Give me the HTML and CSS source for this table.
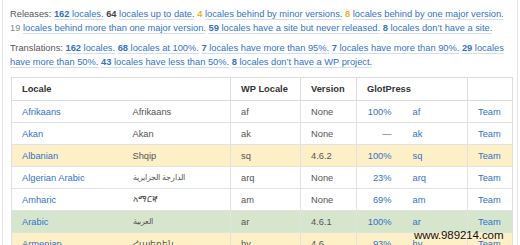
FILE: index.html
```html
<!DOCTYPE html>
<html lang="en">
<head>
<meta charset="utf-8">
<title>Locales</title>
<link rel="stylesheet" href="styles.css">
</head>
<body>
<div class="page">
  <p class="summary">Releases: <a href="#"><b>162</b> locales.</a> <b class="dark">64</b> <a href="#">locales up to date.</a> <b class="orange">4</b> <a href="#">locales behind by minor versions.</a> <b class="orange">8</b> <a href="#">locales behind by one major version.</a> <b class="grey">19</b> <a href="#">locales behind more than one major version.</a> <a href="#"><b>59</b> locales have a site but never released.</a> <a href="#"><b>8</b> locales don’t have a site.</a></p>
  <p class="summary">Translations: <a href="#"><b>162</b> locales.</a> <a href="#"><b>68</b> locales at 100%.</a> <a href="#"><b>7</b> locales have more than 95%.</a> <a href="#"><b>7</b> locales have more than 90%.</a> <a href="#"><b>29</b> locales have more than 50%.</a> <a href="#"><b>43</b> locales have less than 50%.</a> <a href="#"><b>8</b> locales don’t have a WP project.</a></p>
  <table class="locales">
    <colgroup>
      <col class="c-name"><col class="c-native"><col class="c-wp"><col class="c-ver"><col class="c-pct"><col class="c-code"><col class="c-team">
    </colgroup>
    <thead>
      <tr><th colspan="2">Locale</th><th>WP Locale</th><th>Version</th><th colspan="2">GlotPress</th><th></th></tr>
    </thead>
    <tbody>
      <tr><td class="nm"><a href="#">Afrikaans</a></td><td class="nat">Afrikaans</td><td>af</td><td>None</td><td class="pct"><a href="#">100%</a></td><td class="code"><a href="#">af</a></td><td class="team"><a href="#">Team</a></td></tr>
      <tr><td class="nm"><a href="#">Akan</a></td><td class="nat">Akan</td><td>ak</td><td>None</td><td class="pct">—</td><td class="code"><a href="#">ak</a></td><td class="team"><a href="#">Team</a></td></tr>
      <tr class="minor"><td class="nm"><a href="#">Albanian</a></td><td class="nat">Shqip</td><td>sq</td><td>4.6.2</td><td class="pct"><a href="#">100%</a></td><td class="code"><a href="#">sq</a></td><td class="team"><a href="#">Team</a></td></tr>
      <tr><td class="nm"><a href="#">Algerian Arabic</a></td><td class="nat ar">الدارجة الجزايرية</td><td>arq</td><td>None</td><td class="pct"><a href="#">23%</a></td><td class="code"><a href="#">arq</a></td><td class="team"><a href="#">Team</a></td></tr>
      <tr><td class="nm"><a href="#">Amharic</a></td><td class="nat">አማርኛ</td><td>am</td><td>None</td><td class="pct"><a href="#">69%</a></td><td class="code"><a href="#">am</a></td><td class="team"><a href="#">Team</a></td></tr>
      <tr class="latest"><td class="nm"><a href="#">Arabic</a></td><td class="nat ar">العربية</td><td>ar</td><td>4.6.1</td><td class="pct"><a href="#">100%</a></td><td class="code"><a href="#">ar</a></td><td class="team"><a href="#">Team</a></td></tr>
      <tr class="minor"><td class="nm"><a href="#">Armenian</a></td><td class="nat">Հայերեն</td><td>hy</td><td>4.6</td><td class="pct"><a href="#">93%</a></td><td class="code"><a href="#">hy</a></td><td class="team"><a href="#">Team</a></td></tr>
    </tbody>
  </table>
  <div class="watermark">www.989214.com</div>
</div>
</body>
</html>
```
FILE: styles.css
```css
html, body {
  margin: 0;
  padding: 0;
  background: #fff;
  overflow: hidden;
}
body {
  font-family: "Liberation Sans", Arial, sans-serif;
  font-size: 9.3px;
  color: #555;
}
.page {
  position: relative;
  margin-left: 2px;
  width: 516px;
  height: 245px;
  overflow: hidden;
  border-left: 1px solid #e4e4e4;
  border-right: 1px solid #e4e4e4;
  padding: 8px 5px 0 8px;
  box-sizing: border-box;
}
.summary {
  margin: 0 0 7px -1px;
  line-height: 13.5px;
}
.summary + .summary {
  margin-bottom: 8px;
}
a {
  color: #3273c9;
  text-decoration: underline;
  text-decoration-color: #d3def0;
  text-underline-offset: 2px;
}
b { font-weight: bold; }
.dark { color: #444; }
.orange { color: #efb21a; }
.grey { color: #8c8c8c; font-weight: normal; }
.locales {
  width: 501px;
  border-collapse: collapse;
  table-layout: fixed;
  border: 1px solid #dcdcdc;
}
.c-name { width: 111px; }
.c-native { width: 108px; }
.c-wp { width: 70px; }
.c-ver { width: 56px; }
.c-pct { width: 46px; }
.c-code { width: 65px; }
.c-team { width: 45px; }
th {
  text-align: left;
  font-weight: bold;
  color: #333;
  height: 22px;
  padding: 0 10px;
  border: 1px solid #dcdcdc;
  white-space: nowrap;
}
td {
  height: 21px;
  padding: 0 10px;
  border-top: 1px solid #e2e2e2;
  border-bottom: 1px solid #e2e2e2;
  border-left: 1px solid #e2e2e2;
  white-space: nowrap;
  overflow: hidden;
}
td.nat { border-left: none; }
td.code { border-left: none; padding-left: 10px; }
td.pct { text-align: right; padding-right: 11px; }
td.nm a, td.pct a, td.code a, td.team a { text-decoration: none; }
td.ar { font-size: 7.5px; }
tr.minor td { background: #fdf0c6; }
tr.latest td { background: #d5e6cd; }
.watermark {
  position: absolute;
  left: 411px;
  top: 229px;
  font-size: 11.5px;
  color: #111;
  letter-spacing: -0.1px;
}
```
